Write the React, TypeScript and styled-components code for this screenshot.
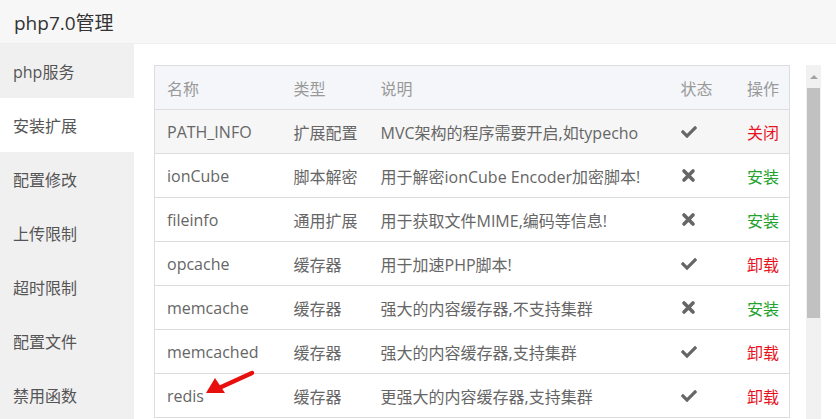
import React from "react";
import styled, { createGlobalStyle } from "styled-components";
import { FaCheck } from "react-icons/fa";

const GlobalStyle = createGlobalStyle`
  html, body {
    margin: 0;
    padding: 0;
    background: #fff;
    font-family: "Open Sans", "Noto Sans CJK SC", sans-serif;
  }
  #root {
    height: 419px;
    overflow: hidden;
  }
`;

const Page = styled.div`
  width: 836px;
  height: 419px;
  display: flex;
  flex-direction: column;
  position: relative;
  overflow: hidden;
`;

const TitleBar = styled.div`
  height: 43px;
  flex: none;
  display: flex;
  align-items: center;
  padding-left: 14px;
  background: #f7f7f7;
  border-bottom: 1px solid #eee;
  color: #333;
  font-size: 19px;
`;

const Body = styled.div`
  flex: 1;
  display: flex;
  min-height: 0;
`;

const Sidebar = styled.div`
  width: 134px;
  flex: none;
  background: #f0f0f0;
  display: flex;
  flex-direction: column;
`;

const NavItem = styled.div<{ $active?: boolean }>`
  height: 54px;
  flex: none;
  display: flex;
  align-items: center;
  padding-left: 13px;
  font-size: 16px;
  color: #555;
  background: ${(p) => (p.$active ? "#fff" : "transparent")};
`;

const Main = styled.div`
  flex: 1;
  display: flex;
  gap: 16px;
  padding: 21px 16px 0 20px;
  min-width: 0;
`;

const TableWrap = styled.div`
  width: 636px;
  flex: none;
`;

const Table = styled.table`
  width: 100%;
  border-collapse: collapse;
  border: 1px solid #ddd;
  table-layout: fixed;
  font-size: 16px;
  color: #666;
`;

const Th = styled.th<{ $w?: number; $right?: boolean }>`
  box-sizing: border-box;
  height: 44px;
  padding: 0 ${(p) => (p.$right ? "10px" : "0")} 0 12px;
  text-align: ${(p) => (p.$right ? "right" : "left")};
  font-weight: normal;
  color: #999;
  background: #f5f6fa;
  border-bottom: 1px solid #ddd;
  width: ${(p) => (p.$w ? `${p.$w}px` : "auto")};
`;

const Row = styled.tr<{ $hover?: boolean }>`
  background: ${(p) => (p.$hover ? "#f6f6f6" : "#fff")};
`;

const Td = styled.td<{ $right?: boolean }>`
  box-sizing: border-box;
  height: 44px;
  padding: 0 ${(p) => (p.$right ? "10px" : "0")} 0 12px;
  text-align: ${(p) => (p.$right ? "right" : "left")};
  border-bottom: 1px solid #ddd;
  white-space: nowrap;
  overflow: hidden;
`;

const StatusCell = styled(Td)`
  color: #666;
  svg {
    display: block;
  }
`;

const Action = styled.span<{ $tone: "red" | "green" }>`
  color: ${(p) => (p.$tone === "red" ? "#e8121e" : "#23a22e")};
`;

const Scrollbar = styled.div`
  width: 15px;
  flex: none;
  background: #f1f1f1;
  display: flex;
  flex-direction: column;
  height: 398px;
`;

const ScrollArrow = styled.div`
  height: 23px;
  display: flex;
  align-items: center;
  justify-content: center;
  &::before {
    content: "";
    border-left: 4px solid transparent;
    border-right: 4px solid transparent;
    border-bottom: 4px solid #a3a3a3;
  }
`;

const ScrollThumb = styled.div`
  height: 230px;
  margin: 0 1px;
  background: #c1c1c1;
`;

const Pointer = styled.svg`
  position: absolute;
  left: 203px;
  top: 367px;
`;

const Cross = () => (
  <svg width="15" height="15" viewBox="0 0 15 15">
    <path d="M3 3 L12 12 M12 3 L3 12" stroke="#666" strokeWidth="3.6" strokeLinecap="round" />
  </svg>
);

type Ext = {
  name: string;
  type: string;
  desc: string;
  on: boolean;
  action: string;
  tone: "red" | "green";
};

const nav = ["php服务", "安装扩展", "配置修改", "上传限制", "超时限制", "配置文件", "禁用函数"];

const rows: Ext[] = [
  { name: "PATH_INFO", type: "扩展配置", desc: "MVC架构的程序需要开启,如typecho", on: true, action: "关闭", tone: "red" },
  { name: "ionCube", type: "脚本解密", desc: "用于解密ionCube Encoder加密脚本!", on: false, action: "安装", tone: "green" },
  { name: "fileinfo", type: "通用扩展", desc: "用于获取文件MIME,编码等信息!", on: false, action: "安装", tone: "green" },
  { name: "opcache", type: "缓存器", desc: "用于加速PHP脚本!", on: true, action: "卸载", tone: "red" },
  { name: "memcache", type: "缓存器", desc: "强大的内容缓存器,不支持集群", on: false, action: "安装", tone: "green" },
  { name: "memcached", type: "缓存器", desc: "强大的内容缓存器,支持集群", on: true, action: "卸载", tone: "red" },
  { name: "redis", type: "缓存器", desc: "更强大的内容缓存器,支持集群", on: true, action: "卸载", tone: "red" },
];

export default function App() {
  return (
    <Page>
      <GlobalStyle />
      <TitleBar>php7.0管理</TitleBar>
      <Body>
        <Sidebar>
          {nav.map((n, i) => (
            <NavItem key={n} $active={i === 1}>
              {n}
            </NavItem>
          ))}
        </Sidebar>
        <Main>
          <TableWrap>
            <Table>
              <thead>
                <tr>
                  <Th $w={127}>名称</Th>
                  <Th $w={87}>类型</Th>
                  <Th $w={300}>说明</Th>
                  <Th $w={66}>状态</Th>
                  <Th $right>操作</Th>
                </tr>
              </thead>
              <tbody>
                {rows.map((r, i) => (
                  <Row key={r.name} $hover={i === 0}>
                    <Td>{r.name}</Td>
                    <Td>{r.type}</Td>
                    <Td>{r.desc}</Td>
                    <StatusCell>{r.on ? <FaCheck size={16} /> : <Cross />}</StatusCell>
                    <Td $right>
                      <Action $tone={r.tone}>{r.action}</Action>
                    </Td>
                  </Row>
                ))}
              </tbody>
            </Table>
          </TableWrap>
          <Scrollbar>
            <ScrollArrow />
            <ScrollThumb />
          </Scrollbar>
        </Main>
      </Body>
      <Pointer width="56" height="32" viewBox="0 0 56 32">
        <line x1="49" y1="6" x2="16" y2="21" stroke="#e8100f" strokeWidth="4.5" strokeLinecap="round" />
        <polygon points="3,26 12,11 22,26" fill="#e8100f" />
      </Pointer>
    </Page>
  );
}
